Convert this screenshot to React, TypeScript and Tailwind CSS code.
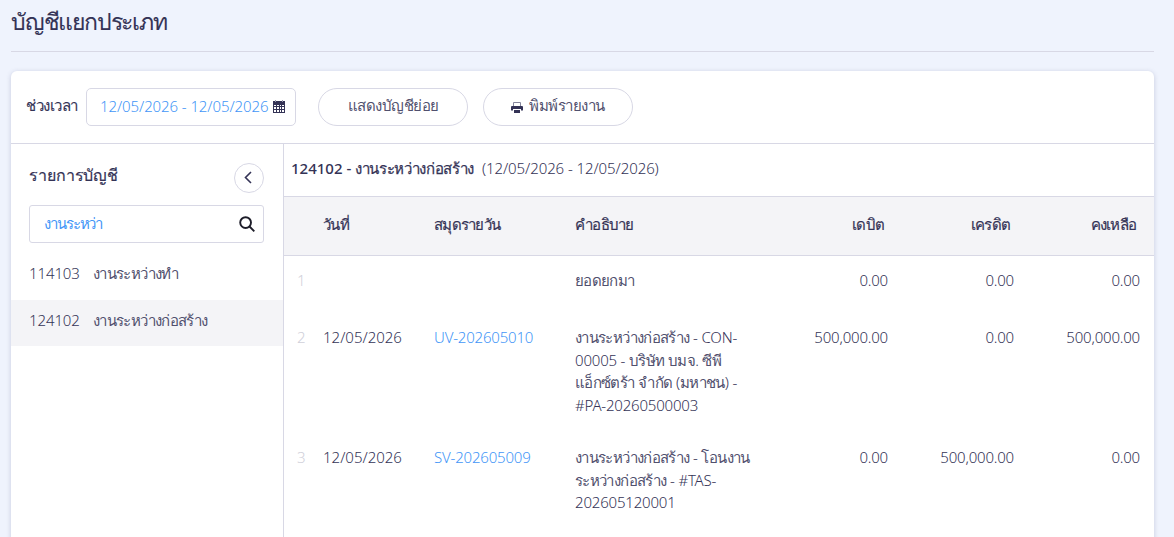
import { useState } from "react";

interface Account {
  code: string;
  name: string;
}

interface LedgerRow {
  date: string;
  journal: string;
  description: string[];
  debit: string;
  credit: string;
  balance: string;
}

const ACCOUNTS: Account[] = [
  { code: "114103", name: "งานระหว่างทำ" },
  { code: "124102", name: "งานระหว่างก่อสร้าง" },
];

const ROWS: LedgerRow[] = [
  { date: "", journal: "", description: ["ยอดยกมา"], debit: "0.00", credit: "0.00", balance: "0.00" },
  {
    date: "12/05/2026",
    journal: "UV-202605010",
    description: ["งานระหว่างก่อสร้าง - CON-", "00005 - บริษัท บมจ. ซีพี", "แอ็กซ์ตร้า จำกัด (มหาชน) -", "#PA-20260500003"],
    debit: "500,000.00",
    credit: "0.00",
    balance: "500,000.00",
  },
  {
    date: "12/05/2026",
    journal: "SV-202605009",
    description: ["งานระหว่างก่อสร้าง - โอนงาน", "ระหว่างก่อสร้าง - #TAS-", "202605120001"],
    debit: "0.00",
    credit: "500,000.00",
    balance: "0.00",
  },
];

const GRID = "grid grid-cols-[39px_111px_141px_200px_113px_126px_126px]";

/** Thai runs are set a little tighter than the Latin text around them */
function Thai({ children, className = "tracking-[-0.64px] text-[#51506e]" }: { children: string; className?: string }) {
  return (
    <>
      {children.split(/([\u0E00-\u0E7F]+)/).map((part, i) =>
        i % 2 ? <span key={i} className={className}>{part}</span> : part
      )}
    </>
  );
}

function CalendarIcon() {
  return (
    <svg viewBox="0 0 12 13" className="h-[13px] w-3 shrink-0" shapeRendering="crispEdges">
      <path fill="#343356" fillRule="evenodd" d="M0 1h12v12H0zM1 5v1h2V5zM4 5v1h2V5zM7 5v1h1V5zM9 5v1h2V5zM1 7v2h2V7zM4 7v2h2V7zM7 7v2h1V7zM9 7v2h2V7zM1 10v2h2v-2zM4 10v2h2v-2zM7 10v2h1v-2zM9 10v2h2v-2z" />
      <path fill="#9c9cb0" d="M2 0h1v2H2zM9 0h1v2H9z" />
    </svg>
  );
}

function PrintIcon() {
  return (
    <svg viewBox="0 0 12 11" className="h-[11px] w-3 shrink-0">
      <path fill="none" stroke="#85869d" d="M2.5 4V.5h7V4" />
      <path fill="#343356" d="M1 4h10q1 0 1 1v3q0 .5-.5.5H10V7H2v1.5H.5Q0 8.5 0 8V5q0-1 1-1z" />
      <path fill="#343356" d="M3 8h6v3H3z" />
    </svg>
  );
}

function Toolbar() {
  return (
    <div className="flex h-[73px] items-center border-b border-[#d8d8e5] pl-[15px]">
      <label className="w-[60px] pb-[3px] font-medium whitespace-nowrap [-webkit-text-stroke:0.15px]">
        <Thai className="tracking-[-0.45px]">ช่วงเวลา</Thai>
      </label>
      <div className="flex h-[38px] w-[210px] items-center justify-between rounded-[5px] border border-[#d8d8e5] pr-[10px] pb-[2px] pl-[13px] text-[#4396f7]">
        <span className="tracking-[-0.09px] whitespace-nowrap">12/05/2026 - 12/05/2026</span>
        <CalendarIcon />
      </div>
      <button className="ml-[22px] h-[38px] w-[150px] rounded-full border border-[#d8d8e5] pb-[3px] whitespace-nowrap">
        <Thai className="tracking-[-0.5px] text-[#51506e]">แสดงบัญชีย่อย</Thai>
      </button>
      <button className="ml-[15px] flex h-[38px] w-[150px] items-center justify-center gap-[6px] rounded-full border border-[#d8d8e5] whitespace-nowrap">
        <PrintIcon />
        <span className="pb-[3px]">
          <Thai className="tracking-[-0.45px] text-[#51506e]">พิมพ์รายงาน</Thai>
        </span>
      </button>
    </div>
  );
}

function Sidebar({ selected, onSelect }: { selected: string; onSelect: (code: string) => void }) {
  return (
    <aside className="w-[273px] shrink-0 border-r border-[#d8d8e5]">
      <div className="flex items-start justify-between pt-[19px] pr-[19px] pl-[18px]">
        <h2 className="text-base font-medium whitespace-nowrap [-webkit-text-stroke:0.2px]">
          <Thai className="tracking-[-0.1px]">รายการบัญชี</Thai>
        </h2>
        <button className="flex size-[30px] items-center justify-center rounded-full border border-[#d8d8e5]">
          <svg viewBox="0 0 30 30" className="size-[30px] shrink-0" fill="none" stroke="#343356" strokeWidth="1.6">
            <path d="M17 9l-5.5 5.5L17 20" />
          </svg>
        </button>
      </div>
      <div className="mt-3 mr-[19px] ml-[18px] flex h-[38px] items-center justify-between rounded-[3px] border border-[#d8d8e5] pr-2 pl-[14px]">
        <span className="pb-[2px] whitespace-nowrap text-[#4396f7]">
          <Thai className="tracking-[-1.1px]">งานระหว่า</Thai>
        </span>
        <svg viewBox="0 0 16 16" className="size-4" fill="none" stroke="#1d1d29" strokeWidth="1.9">
          <circle cx="6.6" cy="6.6" r="5.4" />
          <path d="M10.5 10.5l4.8 4.8" />
        </svg>
      </div>
      <ul className="mt-[10px]">
        {ACCOUNTS.map((account) => (
          <li
            key={account.code}
            onClick={() => onSelect(account.code)}
            className={`mb-px flex h-[46px] items-center pb-[6px] pl-[18px] whitespace-nowrap ${account.code === selected ? "bg-[#f4f4f7]" : ""}`}
          >
            <span className="w-16 tracking-[-0.1px]">{account.code}</span>
            <span><Thai>{account.name}</Thai></span>
          </li>
        ))}
      </ul>
    </aside>
  );
}

function LedgerTable({ account }: { account: Account }) {
  return (
    <section className="min-w-0 flex-1">
      <div className="flex h-[52px] items-center gap-2 pb-[3px] pl-[7px] whitespace-nowrap">
        <h2 className="font-medium">
          <Thai className="tracking-[-0.35px] [-webkit-text-stroke:0.25px]">{`${account.code} - ${account.name}`}</Thai>
        </h2>
        <span className="tracking-[-0.08px]">(12/05/2026 - 12/05/2026)</span>
      </div>
      <div className={`${GRID} h-[60px] items-center border-y border-[#d8d8e5] bg-[#f4f4f7] pb-[3px] font-medium tracking-[-0.75px] whitespace-nowrap [-webkit-text-stroke:0.2px]`}>
        <span />
        <span>วันที่</span>
        <span>สมุดรายวัน</span>
        <span>คำอธิบาย</span>
        <span className="pr-1 text-right">เดบิต</span>
        <span className="pr-1 text-right">เครดิต</span>
        <span className="pr-1 text-right">คงเหลือ</span>
      </div>
      {ROWS.map((row, i) => (
        <div key={i} className={`${GRID} min-h-[57px] pt-[13px] pb-[17px] tracking-[-0.19px] whitespace-nowrap`}>
          <span className="pl-[13px] text-[#d0d0da]">{i + 1}</span>
          <span className="tracking-normal">{row.date}</span>
          <a className="text-[#4396f7]">{row.journal}</a>
          <div>
            {row.description.map((line) => (
              <p key={line}><Thai>{line}</Thai></p>
            ))}
          </div>
          <span className="text-right">{row.debit}</span>
          <span className="text-right">{row.credit}</span>
          <span className="text-right">{row.balance}</span>
        </div>
      ))}
    </section>
  );
}

export default function App() {
  const [selected, setSelected] = useState("124102");
  const account = ACCOUNTS.find((a) => a.code === selected) ?? ACCOUNTS[0];

  return (
    <div className="h-[537px] w-[1174px] overflow-hidden bg-[#eff3fd] pr-5 pl-[11px] font-['Noto_Sans',sans-serif] text-[15px] leading-[22.5px] font-light text-[#343356]">
      <header className="flex h-[52px] items-start border-b border-[#d8d8e5] pt-[5px]">
        <h1 className="text-[23px] leading-8 font-medium tracking-[-1.2px] whitespace-nowrap [-webkit-text-stroke:0.1px]">บัญชีแยกประเภท</h1>
      </header>
      <main className="mt-[19px] flex h-[500px] flex-col rounded-md bg-white shadow-[0_1px_5px_rgba(60,60,110,0.22)]">
        <Toolbar />
        <div className="flex min-h-0 flex-1">
          <Sidebar selected={selected} onSelect={setSelected} />
          <LedgerTable account={account} />
        </div>
      </main>
    </div>
  );
}
